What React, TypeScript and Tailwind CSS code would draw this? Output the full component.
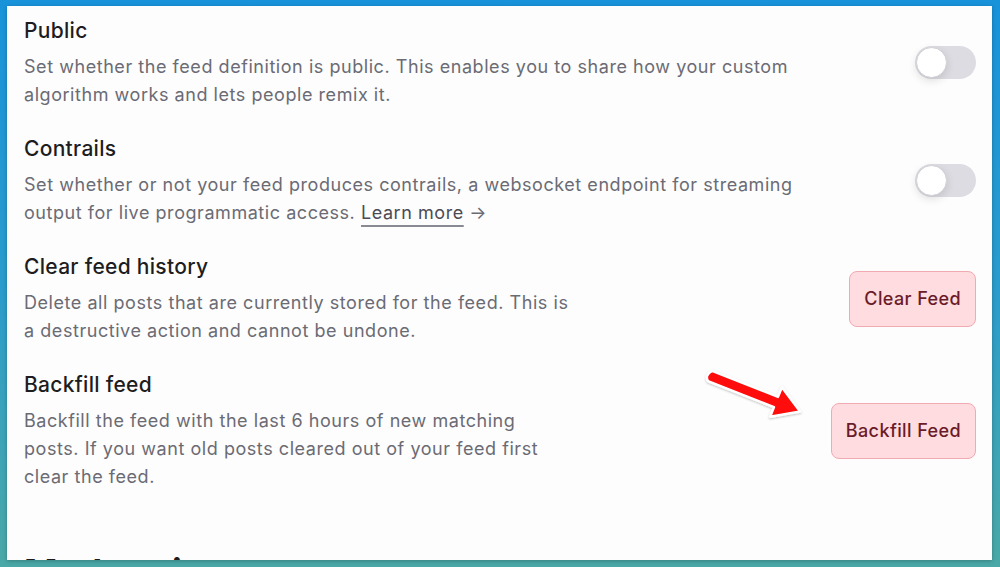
import React from "react";

const Toggle = () => (
  <div className="relative w-[61px] h-[33px] shrink-0 rounded-full bg-[#dcdce2]">
    <div className="absolute left-[1px] top-[1px] w-[31px] h-[31px] rounded-full bg-white border border-[#d0d0d6] shadow-[0_3px_8px_rgba(0,0,0,0.12)]" />
  </div>
);

const DangerButton = ({ label }: { label: string }) => (
  <button className="shrink-0 rounded-[8px] border border-[#f2aab2] bg-[#fedcdf] px-[14px] py-[13px] text-[18px] leading-[28px] tracking-[0.4px] font-medium text-[#6a1b2a]">
    {label}
  </button>
);

interface RowProps {
  title: string;
  children: React.ReactNode;
  action: React.ReactNode;
}

const Row = ({ title, children, action }: RowProps) => (
  <div className="flex items-center justify-between gap-6">
    <div>
      <h3 className="pt-[1px] text-[21px] leading-[27px] tracking-[0.3px] font-medium text-[#1d1d1f]">{title}</h3>
      <p className="mt-[9px] text-[18px] leading-[28px] tracking-[0.55px] text-[#6b6b74]">{children}</p>
    </div>
    {action}
  </div>
);

const RedArrow = () => (
  <svg
    className="absolute left-[700px] top-[362px]"
    width="112"
    height="64"
    viewBox="0 0 112 64"
  >
    <defs>
      <filter id="sh" x="-20%" y="-20%" width="140%" height="140%">
        <feDropShadow dx="0" dy="1" stdDeviation="1" floodColor="#000" floodOpacity="0.25" />
      </filter>
    </defs>
    <g filter="url(#sh)">
      <path
        d="M12 8.9 L78 34.9 L81.9 25.2 L100.1 49.6 L70.1 54.8 L74 45.1 L8 19.1 Q4.5 13 12 8.9 Z"
        fill="#ff0a0a"
        stroke="#fff"
        strokeWidth="2.5"
        strokeLinejoin="round"
      />
    </g>
  </svg>
);

export default function App() {
  return (
    <div
      className="relative w-[1000px] h-[567px] bg-gradient-to-b from-[#1893da] via-[#2a9ccc] to-[#4aa8a6] pt-[6px] pl-[7px] pr-[8px] pb-[7px]"
      style={{ fontFamily: "Inter, 'Noto Sans', sans-serif" }}
    >
      <div className="h-full overflow-hidden bg-[#fdfdfd] shadow-[0_1px_4px_rgba(0,0,0,0.25)] pl-[17px] pr-[16px] pt-[10px]">
        <div className="flex flex-col gap-[25px]">
          <Row title="Public" action={<Toggle />}>
            Set whether the feed definition is public. This enables you to share how your custom
            <br />
            algorithm works and lets people remix it.
          </Row>
          <Row title="Contrails" action={<Toggle />}>
            Set whether or not your feed produces contrails, a websocket endpoint for streaming
            <br />
            output for live programmatic access.{" "}
            <a className="text-[#4b4b55] underline decoration-[1.5px] underline-offset-[6px] decoration-[#8a8a92]">
              Learn more
            </a>{" "}
            →
          </Row>
          <Row title="Clear feed history" action={<DangerButton label="Clear Feed" />}>
            Delete all posts that are currently stored for the feed. This is
            <br />
            a destructive action and cannot be undone.
          </Row>
          <Row title="Backfill feed" action={<DangerButton label="Backfill Feed" />}>
            Backfill the feed with the last 6 hours of new matching
            <br />
            posts. If you want old posts cleared out of your feed first
            <br />
            clear the feed.
          </Row>
        </div>
        <h2 className="mt-[61px] text-[36px] leading-[40px] font-bold text-[#1d1d1f]">Moderation</h2>
      </div>
      <RedArrow />
    </div>
  );
}
